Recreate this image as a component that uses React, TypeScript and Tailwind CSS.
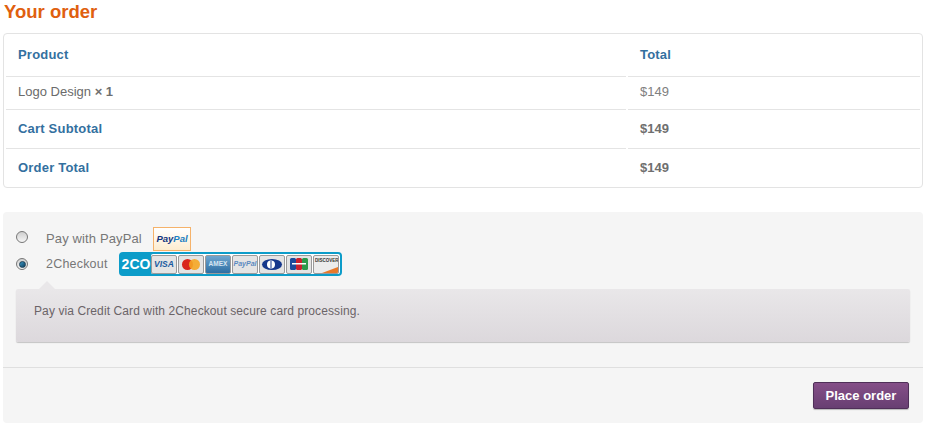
import React from "react";

function Row({ label, value, bold, labelBlue, height, pb }: { label: React.ReactNode; value: string; bold?: boolean; labelBlue?: boolean; height: string; pb: string }) {
  return (
    <div className={`flex ${height}`}>
      <div className={`w-[620px] ml-[2px] border-b border-[#e4e4e4] pl-[12px] ${pb} flex items-center ${labelBlue ? "text-[#33709f] font-bold tracking-[0.2px]" : "text-[#6b6b6b]"}`}>{label}</div>
      <div className={`w-[292px] ml-[2px] border-b border-[#e4e4e4] pl-[12px] ${pb} flex items-center ${labelBlue && value === "Total" ? "text-[#33709f] font-bold tracking-[0.2px]" : bold ? "font-bold text-[#6f6f6f]" : "text-[#808080]"}`}>{value}</div>
    </div>
  );
}

function Card({ children, className }: { children?: React.ReactNode; className?: string }) {
  return (
    <div className={`relative w-[26px] h-[19px] rounded-[2px] border border-[#9a9a9a] bg-[#e4e4e4] flex items-center justify-center overflow-hidden shrink-0 ${className ?? ""}`}>
      {children}
    </div>
  );
}

function Radio({ checked }: { checked?: boolean }) {
  return (
    <span className="w-[12px] h-[12px] rounded-full border border-[#777777] bg-gradient-to-b from-[#cfcfcf] to-[#f6f6f6] flex items-center justify-center shrink-0">
      {checked && <span className="w-[7px] h-[7px] rounded-full bg-gradient-to-br from-[#3a9ac8] to-[#0f3f5e] border border-[#1b3f55]" />}
    </span>
  );
}

export default function App() {
  return (
    <div className="w-[926px] h-[427px] bg-white overflow-hidden font-['Liberation_Sans',Arial,sans-serif] text-[13px] pl-[3px] relative">
      <h2 className="text-[18.5px] leading-[24px] font-bold text-[#e0600f] pl-[1px] h-[33px]">Your order</h2>

      <div className="w-[920px] h-[155px] border border-[#e3e3e3] rounded-[4px]">
        <Row label="Product" value="Total" labelBlue height="h-[43px]" pb="pb-0" />
        <Row label={<span>Logo Design <b className="text-[#6f6f6f]">× 1</b></span>} value="$149" height="h-[33px]" pb="pb-[2px]" />
        <Row label="Cart Subtotal" value="$149" labelBlue bold height="h-[39px]" pb="pb-0" />
        <div className="flex h-[38px]">
          <div className="w-[620px] ml-[2px] pl-[12px] flex items-center text-[#33709f] font-bold tracking-[0.2px]">Order Total</div>
          <div className="w-[292px] ml-[2px] pl-[12px] flex items-center font-bold text-[#6f6f6f]">$149</div>
        </div>
      </div>

      <div className="w-[920px] h-[211px] mt-[24px] bg-[#f5f5f5] rounded-[4px] flex flex-col">
        <div className="h-[15px]" />
        <div className="flex items-center h-[24px] pl-[13px] text-[#777777] text-[13px] tracking-[0.13px]">
          <span className="-translate-y-[2px]"><Radio /></span>
          <span className="ml-[18px] w-[107px]">Pay with PayPal</span>
          <div className="w-[38px] h-[24px] border border-[#f5b26a] bg-gradient-to-b from-white to-[#fdeccf] flex items-center justify-center text-[9.5px] tracking-normal font-bold italic">
            <span className="text-[#12357f]">Pay</span><span className="text-[#1c7fc2]">Pal</span>
          </div>
        </div>
        <div className="flex items-center h-[26px] pl-[13px] text-[#777777] text-[12.5px] tracking-[0.2px]">
          <Radio checked />
          <span className="ml-[18px] w-[73px]">2Checkout</span>
          <div className="w-[223px] h-[24px] rounded-[4px] bg-[#0c9cc9] p-[2px] flex items-stretch tracking-normal">
            <div className="w-[30px] shrink-0 flex items-center justify-center text-white font-bold text-[14px]">2CO</div>
            <div className="flex-1 bg-white rounded-[2px] flex items-center gap-[1px]">
              <Card><span className="text-[#1a5a9f] font-bold italic text-[8.5px]">VISA</span></Card>
              <Card>
                <svg width="20" height="13" viewBox="0 0 20 13">
                  <circle cx="6.5" cy="6.5" r="5.5" fill="#d9261c" />
                  <circle cx="13.5" cy="6.5" r="5.5" fill="#f5a623" fillOpacity="0.9" />
                </svg>
              </Card>
              <Card className="bg-gradient-to-b from-[#6fa6cf] to-[#2c6ea3]"><span className="text-[#d6e6f2] font-bold text-[6.5px]">AMEX</span></Card>
              <Card><span className="font-bold italic text-[7px] text-[#5b8ac0]">PayPal</span></Card>
              <Card>
                <svg width="22" height="13" viewBox="0 0 22 13">
                  <ellipse cx="11" cy="6.5" rx="10" ry="5.5" fill="#16388c" />
                  <circle cx="10" cy="6.5" r="4" fill="#fff" />
                  <rect x="9.5" y="3" width="1" height="7" fill="#16388c" />
                </svg>
              </Card>
              <Card>
                <svg width="20" height="14" viewBox="0 0 20 14">
                  <rect x="1" y="1" width="6" height="12" rx="1.5" fill="#1b4a9c" />
                  <rect x="7" y="1" width="6" height="12" rx="1.5" fill="#c8202f" />
                  <rect x="13" y="1" width="6" height="12" rx="1.5" fill="#2a9a4a" />
                  <rect x="3" y="6" width="14" height="1.5" fill="#fff" />
                </svg>
              </Card>
              <Card className="bg-[#ececec]">
                <span className="text-[#333333] font-bold text-[4.5px] absolute top-[2px] left-[1px]">DISCOVER</span>
                <svg className="absolute bottom-0 right-0" width="16" height="8" viewBox="0 0 16 8">
                  <path d="M0 8 L16 2 V8 Z" fill="#e8792a" />
                </svg>
              </Card>
            </div>
          </div>
        </div>

        <div className="relative mt-[12px] ml-[13px] w-[894px] h-[53px] bg-gradient-to-b from-[#e9e7e9] to-[#dcd8dc] rounded-[2px] shadow-[0_1px_1px_rgba(0,0,0,0.2)] pl-[18px] pb-[10px] flex items-center text-[12px] tracking-[0.1px] text-[#6b6468]">
          <span className="absolute -top-[8px] left-[23px] w-0 h-0 border-x-[8px] border-x-transparent border-b-[8px] border-b-[#e9e7e9]" />
          Pay via Credit Card with 2Checkout secure card processing.
        </div>

        <div className="mt-[25px] border-t border-[#dfdfdf] flex-1 flex justify-end pr-[14px] pt-[14px]">
          <button className="w-[96px] h-[27px] rounded-[2px] border border-[#4f2f58] bg-gradient-to-b from-[#854f88] to-[#683f72] text-white font-bold text-[13px] shadow-[0_1px_1px_rgba(0,0,0,0.25)]">Place order</button>
        </div>
      </div>
    </div>
  );
}
